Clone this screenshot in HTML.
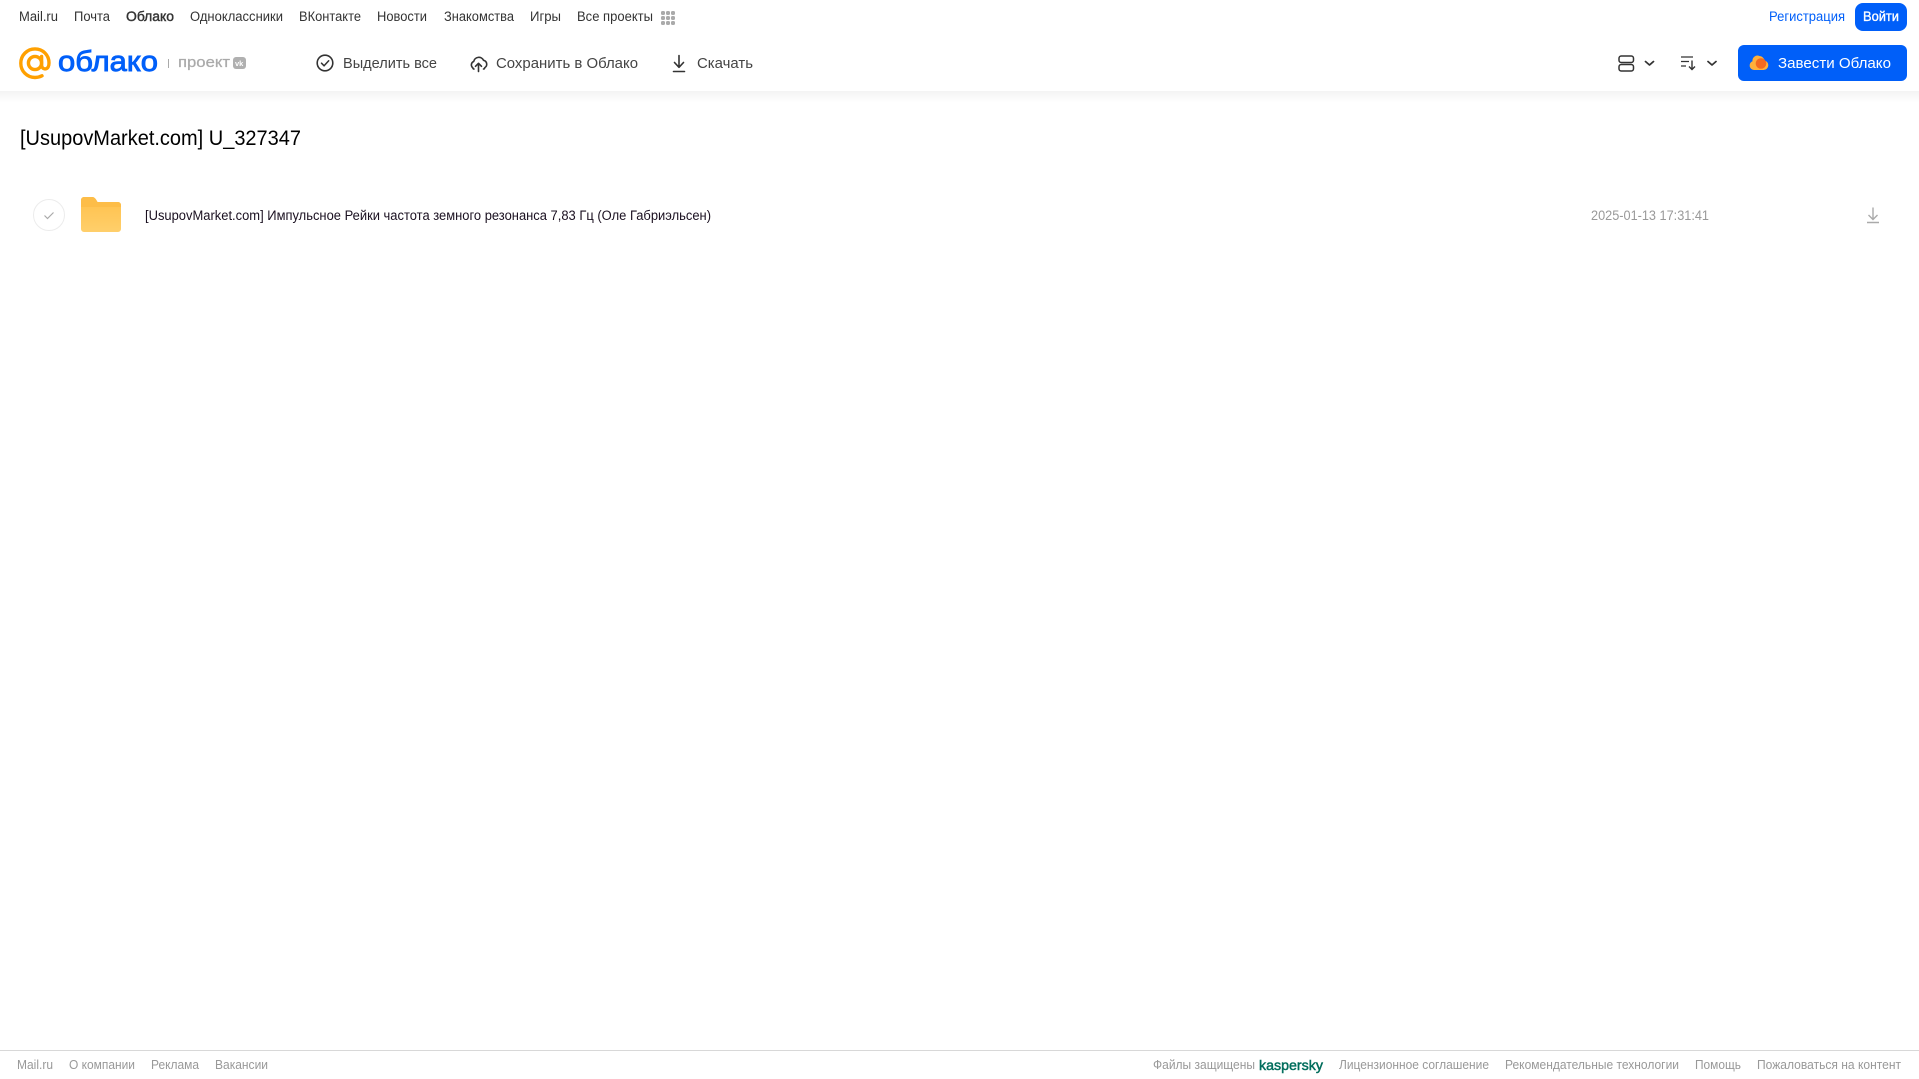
<!DOCTYPE html>
<html lang="ru"><head><meta charset="utf-8"><title>Облако</title>
<style>
html,body{margin:0;padding:0;background:#fff;width:1919px;height:1079px;overflow:hidden}
svg{display:block;position:absolute;left:0;top:0}
text{font-family:"Liberation Sans","DejaVu Sans",sans-serif}
</style></head><body>
<svg width="1919" height="1079" viewBox="0 0 1919 1079" xmlns="http://www.w3.org/2000/svg">
<defs><linearGradient id="s" x1="0" y1="0" x2="0" y2="1"><stop offset="0" stop-color="#f3f3f3"/><stop offset="1" stop-color="#fff"/></linearGradient>
<linearGradient id="f" x1="0" y1="0" x2="0" y2="1"><stop offset="0" stop-color="#ffc04a"/><stop offset="1" stop-color="#ffcf6b"/></linearGradient></defs>
<rect x="0" y="91" width="1919" height="12" fill="url(#s)"/>
<g font-size="13.500" fill="#333">
<text x="19" y="21" textLength="39" lengthAdjust="spacingAndGlyphs">Mail.ru</text>
<text x="74" y="21" textLength="36" lengthAdjust="spacingAndGlyphs">Почта</text>
<text x="126" y="21" textLength="48" lengthAdjust="spacingAndGlyphs" stroke="#333" stroke-width=".4">Облако</text>
<text x="190" y="21" textLength="93" lengthAdjust="spacingAndGlyphs">Одноклассники</text>
<text x="299" y="21" textLength="62" lengthAdjust="spacingAndGlyphs">ВКонтакте</text>
<text x="377" y="21" textLength="50" lengthAdjust="spacingAndGlyphs">Новости</text>
<text x="444" y="21" textLength="70" lengthAdjust="spacingAndGlyphs">Знакомства</text>
<text x="530" y="21" textLength="31" lengthAdjust="spacingAndGlyphs">Игры</text>
<text x="577" y="21" textLength="76" lengthAdjust="spacingAndGlyphs">Все проекты</text>
</g>
<g fill="#aaa">
<rect x="661" y="11" width="4" height="4" rx="1.500"/><rect x="666" y="11" width="4" height="4" rx="1.500"/><rect x="671" y="11" width="4" height="4" rx="1.500"/>
<rect x="661" y="16" width="4" height="4" rx="1.500"/><rect x="666" y="16" width="4" height="4" rx="1.500"/><rect x="671" y="16" width="4" height="4" rx="1.500"/>
<rect x="661" y="21" width="4" height="4" rx="1.500"/><rect x="666" y="21" width="4" height="4" rx="1.500"/><rect x="671" y="21" width="4" height="4" rx="1.500"/>
</g>
<text x="1769" y="21" font-size="13.500" fill="#005ff9" textLength="76" lengthAdjust="spacingAndGlyphs">Регистрация</text>
<rect x="1855" y="3" width="52" height="28" rx="8" fill="#005ff9"/>
<text x="1863" y="21" font-size="13.500" fill="#fff" stroke="#fff" stroke-width=".35" textLength="36" lengthAdjust="spacingAndGlyphs">Войти</text>

<!-- logo -->
<g fill="none" stroke="#ffa000" stroke-width="3.400" stroke-linecap="round">
<circle cx="35" cy="63" r="6.600"/>
<path d="M41.600 56.500v8.200c0 2.800 1.700 4.200 3.600 4.200 2.600 0 3.800-2.600 3.800-6 0-8-6.200-14-14-14-8 0-14.200 6.500-14.200 14.300 0 8 6.200 14.300 14.200 14.300 2.800 0 5-.6 7-1.700"/>
</g>
<text x="58" y="71" font-size="29" fill="#005ff9" stroke="#005ff9" stroke-width=".9" textLength="100" lengthAdjust="spacingAndGlyphs">облако</text>
<rect x="168" y="59" width="1" height="9" fill="#aaa"/>
<text x="178" y="67" font-size="15" fill="#aaa" stroke="#aaa" stroke-width=".25" textLength="52" lengthAdjust="spacingAndGlyphs">проект</text>
<rect x="233" y="57" width="13" height="12" rx="3" fill="#b0b0b0"/>
<text x="235" y="66" font-size="7.500" font-weight="700" fill="#fff">vk</text>

<!-- actions -->
<circle cx="325" cy="63" r="7.800" fill="none" stroke="#333" stroke-width="1.600"/>
<path d="M321.500 63.200l2.600 2.600 4.600-5" fill="none" stroke="#333" stroke-width="1.500" stroke-linecap="round" stroke-linejoin="round"/>
<text x="343" y="68" font-size="14.500" fill="#444" textLength="94" lengthAdjust="spacingAndGlyphs">Выделить все</text>
<path d="M474 69h-.5l-1-1.500a3.600 3.600 0 0 1 1.200-6 5.200 5.200 0 0 1 9.800-1.200 4 4 0 0 1 1.500 7.200l-1 1.500h-.5" fill="none" stroke="#333" stroke-width="1.600" stroke-linecap="round" stroke-linejoin="round"/>
<path d="M478.500 71.500v-8M475.500 66.300l3-3 3 3" fill="none" stroke="#333" stroke-width="1.600" stroke-linecap="round" stroke-linejoin="round"/>
<text x="496" y="68" font-size="14.500" fill="#444" textLength="142" lengthAdjust="spacingAndGlyphs">Сохранить в Облако</text>
<path d="M679 55.500v11.500M674.500 62.500l4.500 4.800 4.500-4.800M673.500 71.500h11" fill="none" stroke="#333" stroke-width="1.600" stroke-linecap="round" stroke-linejoin="round"/>
<text x="697" y="68" font-size="14.500" fill="#444" textLength="56" lengthAdjust="spacingAndGlyphs">Скачать</text>

<!-- right controls -->
<g fill="none" stroke="#333" stroke-width="1.500">
<rect x="1619" y="56" width="14.500" height="6.500" rx="2.200"/>
<rect x="1619" y="64.500" width="14.500" height="6.500" rx="2.200"/>
<path d="M1645.500 61.500l4 3.500 4-3.500M1708 61.500l4 3.500 4-3.500" stroke-width="1.700" stroke-linecap="round" stroke-linejoin="round"/>
<path d="M1681 57h12M1681 61.500h8M1681 66h5" stroke-width="1.300"/>
<path d="M1692 60.500v8.500M1689 66.500l3 3 3-3" stroke-width="1.400"/>
</g>
<rect x="1738" y="45" width="169" height="36" rx="6" fill="#005ff9"/>
<path d="M1754 70a4.500 4.500 0 0 1-1.500-8.700 5 5 0 0 1 7-5.300 5.500 5.500 0 0 1 5 4.500 4.800 4.800 0 0 1 3.800 4.700 4.800 4.800 0 0 1-4.800 4.800z" fill="#ffb03a"/>
<circle cx="1761" cy="63.500" r="5.300" fill="#f26a21"/>
<text x="1778" y="68" font-size="14.500" fill="#fff" textLength="113" lengthAdjust="spacingAndGlyphs">Завести Облако</text>

<!-- title -->
<text x="20" y="145" font-size="21.500" fill="#000" textLength="281" lengthAdjust="spacingAndGlyphs">[UsupovMarket.com] U_327347</text>

<!-- row -->
<circle cx="49" cy="215" r="15.500" fill="#fff" stroke="#ececec"/>
<path d="M44.500 215.500l3 3 6-6" fill="none" stroke="#aaa" stroke-width="1.200"/>
<path d="M81 200a3 3 0 0 1 3-3h8c2 0 3 1 4 2.500l1.500 2.500H118a3 3 0 0 1 3 3v24a3 3 0 0 1-3 3H84a3 3 0 0 1-3-3z" fill="url(#f)"/>
<path d="M81 207h40v-2a3 3 0 0 0-3-3H97.500L96 199.500c-1-1.500-2-2.500-4-2.500h-8a3 3 0 0 0-3 3z" fill="#fdbd48"/>
<text x="145" y="220" font-size="13.500" fill="#1a1020" textLength="566" lengthAdjust="spacingAndGlyphs">[UsupovMarket.com] Импульсное Рейки частота земного резонанса 7,83 Гц (Оле Габриэльсен)</text>
<text x="1591" y="220" font-size="13.500" fill="#999" textLength="118" lengthAdjust="spacingAndGlyphs">2025-01-13 17:31:41</text>
<path d="M1873 207.500v12M1868.500 215l4.500 4.500 4.500-4.500M1867 222.500h12" fill="none" stroke="#aaa" stroke-width="1.400"/>

<!-- footer -->
<rect x="0" y="1050" width="1919" height="1" fill="#d8d8d8"/>
<g font-size="12.500" fill="#999">
<text x="17" y="1069" textLength="36" lengthAdjust="spacingAndGlyphs">Mail.ru</text>
<text x="69" y="1069" textLength="66" lengthAdjust="spacingAndGlyphs">О компании</text>
<text x="151" y="1069" textLength="48" lengthAdjust="spacingAndGlyphs">Реклама</text>
<text x="215" y="1069" textLength="53" lengthAdjust="spacingAndGlyphs">Вакансии</text>
<text x="1153" y="1069" textLength="102" lengthAdjust="spacingAndGlyphs">Файлы защищены</text>
<text x="1259" y="1070" font-size="13.500" fill="#006d5c" stroke="#006d5c" stroke-width=".45" textLength="64" lengthAdjust="spacingAndGlyphs">kaspersky</text>
<text x="1339" y="1069" textLength="150" lengthAdjust="spacingAndGlyphs">Лицензионное соглашение</text>
<text x="1505" y="1069" textLength="174" lengthAdjust="spacingAndGlyphs">Рекомендательные технологии</text>
<text x="1695" y="1069" textLength="46" lengthAdjust="spacingAndGlyphs">Помощь</text>
<text x="1757" y="1069" textLength="144" lengthAdjust="spacingAndGlyphs">Пожаловаться на контент</text>
</g>
</svg>
</body></html>
